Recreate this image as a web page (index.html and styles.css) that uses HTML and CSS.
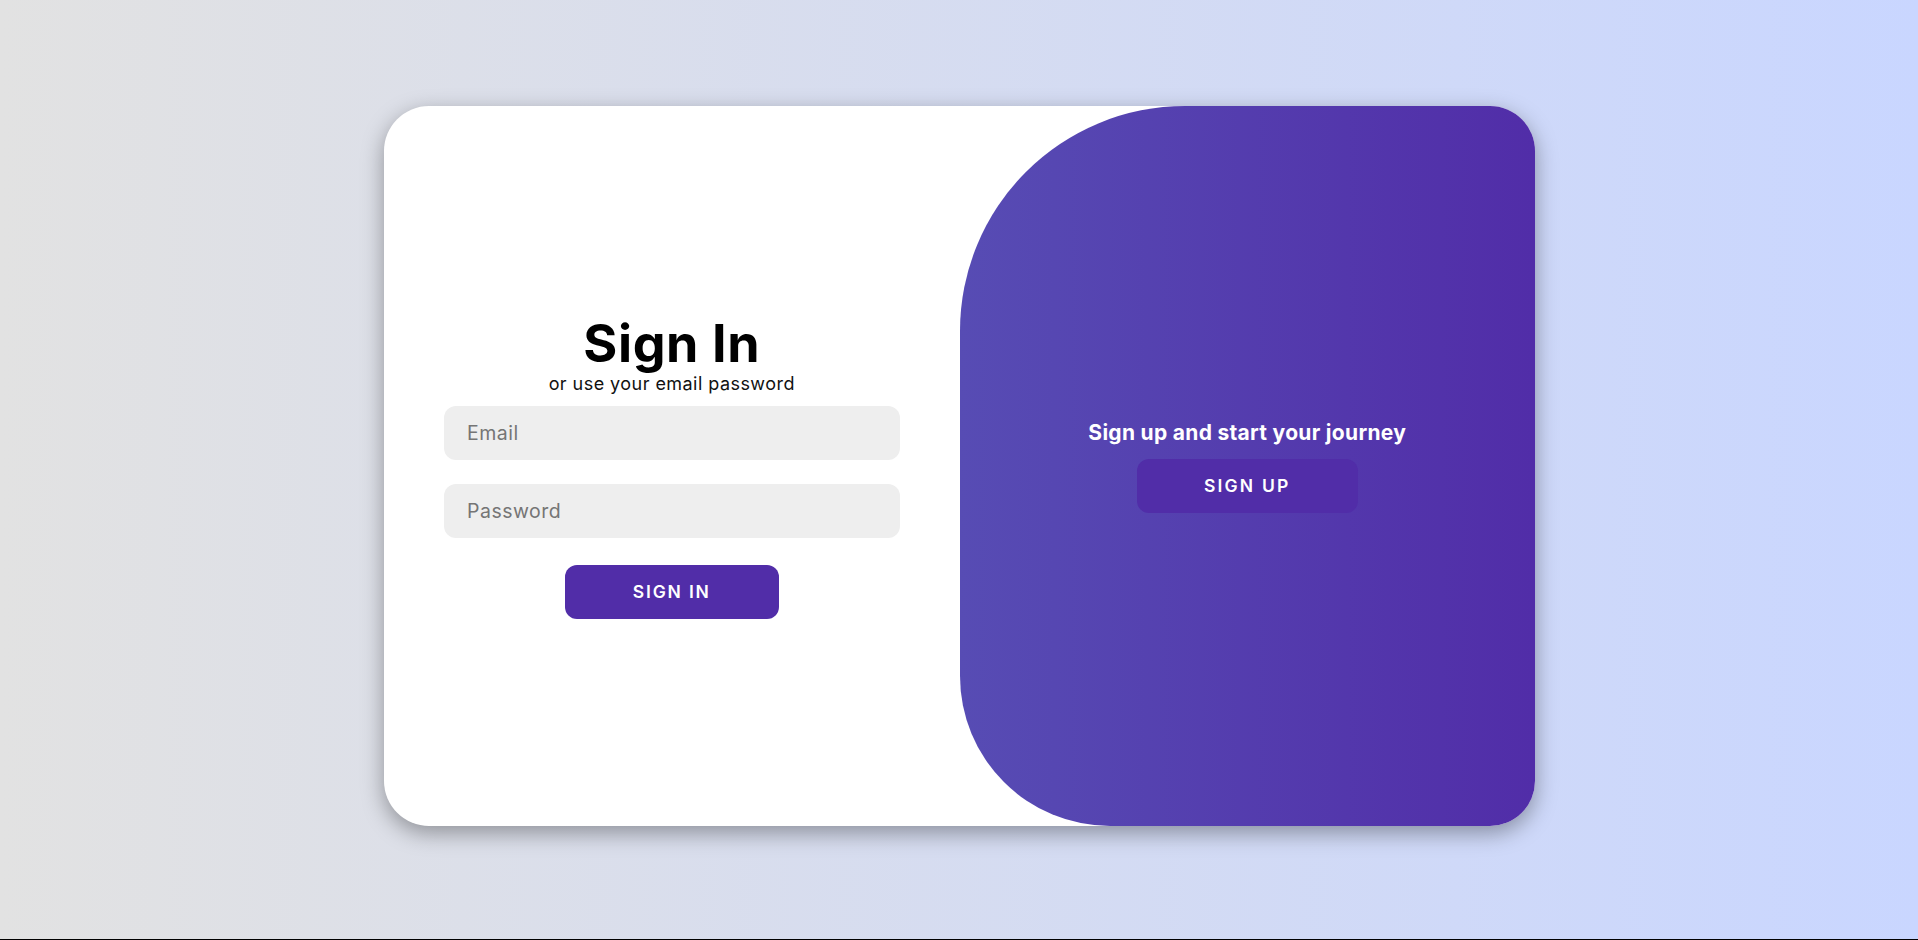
FILE: index.html
```html
<!DOCTYPE html>
<html lang="en">
<head>
<meta charset="utf-8">
<title>Sign In</title>
<link rel="stylesheet" href="styles.css">
</head>
<body>
<div class="card">
  <form class="signin" onsubmit="return false">
    <h1 class="title">Sign In</h1>
    <span class="subtitle">or use your email password</span>
    <input class="field" type="email" placeholder="Email">
    <input class="field" type="password" placeholder="Password">
    <button class="btn" type="submit">Sign In</button>
  </form>
  <div class="panel">
    <p class="panel-text">Sign up and start your journey</p>
    <button class="btn btn-alt" type="button">Sign Up</button>
  </div>
</div>
</body>
</html>
```
FILE: styles.css
```css
* { box-sizing: border-box; }
html { background: #000; height: 100%; }
body {
  margin: 0;
  height: 939px;
  background: linear-gradient(to right, #e2e2e2, #c9d6ff);
  display: flex;
  justify-content: center;
  align-items: flex-start;
  padding-top: 106px;
  font-family: Inter, "Liberation Sans", sans-serif;
}
.card {
  width: 1151px;
  height: 720px;
  margin-left: 1px;
  background: #fff;
  border-radius: 45px;
  box-shadow: 0 7px 22px rgba(0,0,0,0.35);
  display: flex;
  overflow: hidden;
}
.signin {
  width: 50%;
  height: 100%;
  padding: 1px 60px 0;
  display: flex;
  flex-direction: column;
  align-items: center;
  justify-content: center;
  margin: 0;
}
.title {
  margin: 0 0 1px;
  font-size: 52px;
  font-weight: 700;
  line-height: 58px;
  color: #000;
  letter-spacing: 0.6px;
}
.subtitle {
  font-size: 18px;
  line-height: 20px;
  color: #111;
  letter-spacing: 0.45px;
  margin-top: 0;
  margin-bottom: 0;
}
.field {
  width: 100%;
  height: 54px;
  background: #eee;
  border: none;
  border-radius: 12px;
  margin: 12px 0;
  padding: 0 23px;
  font-family: inherit;
  font-size: 19.5px;
  letter-spacing: 0.5px;
  color: #333;
  outline: none;
}
.field::placeholder { color: #757575; }
.btn {
  height: 54px;
  width: 214px;
  margin-top: 15px;
  background: #512da8;
  color: #fff;
  border: none;
  border-radius: 12px;
  font-family: inherit;
  font-size: 17.5px;
  font-weight: 600;
  letter-spacing: 1.8px;
  text-transform: uppercase;
}
.panel {
  width: 50%;
  height: 100%;
  background: linear-gradient(to right, #574cb4, #512da8);
  border-radius: 225px 0 0 150px;
  display: flex;
  flex-direction: column;
  align-items: center;
  justify-content: center;
  color: #fff;
  padding-bottom: 2px;
}
.panel-text {
  margin: 0 0 11px;
  font-size: 21px;
  font-weight: 700;
  line-height: 30px;
  letter-spacing: 0.3px;
}
.btn-alt {
  width: 221px;
  margin-top: 0;
  letter-spacing: 2.2px;
}
```
